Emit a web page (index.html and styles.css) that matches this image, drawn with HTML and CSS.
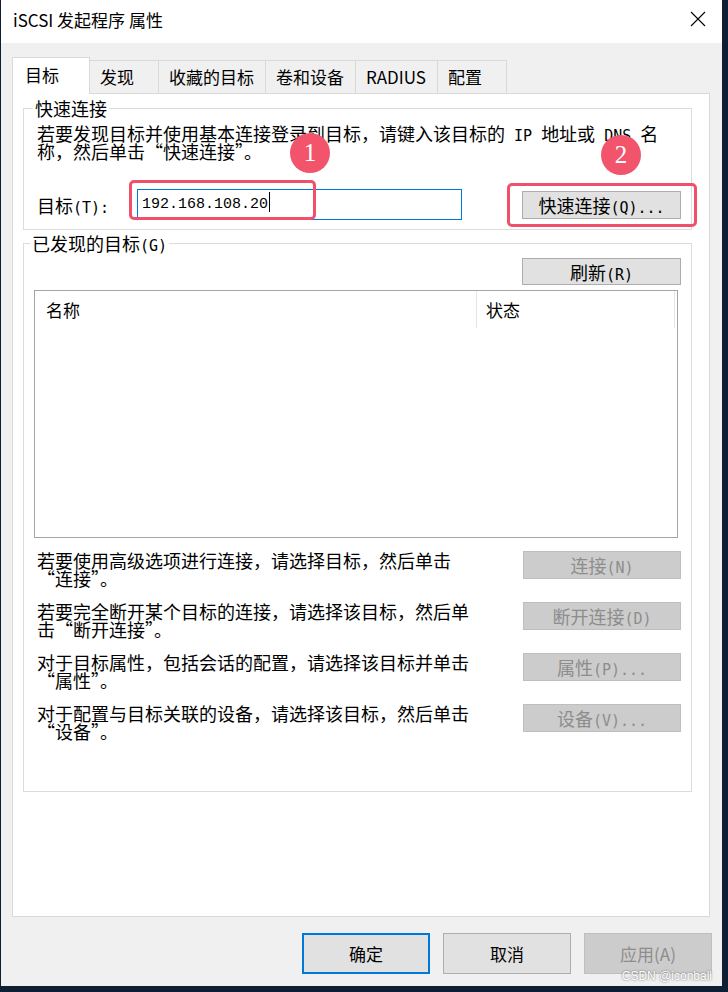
FILE: index.html
```html
<!DOCTYPE html>
<html lang="zh-CN">
<head>
    <meta charset="UTF-8">
    <meta name="viewport" content="width=device-width, initial-scale=1.0">
    <title>iSCSI 发起程序 属性</title>
    <link rel="stylesheet" href="styles.css">
</head>
<body>
    <div class="window">
        <div class="titlebar">
            <span class="title">iSCSI 发起程序 属性</span>
            <svg class="close" width="16" height="16" viewBox="0 0 16 16">
                <path d="M1 1 L15 15 M15 1 L1 15" stroke="#000" stroke-width="1.1" fill="none"/>
            </svg>
        </div>

        <div class="tabs">
            <div class="tab active">目标</div>
            <div class="tab">发现</div>
            <div class="tab">收藏的目标</div>
            <div class="tab">卷和设备</div>
            <div class="tab">RADIUS</div>
            <div class="tab">配置</div>
        </div>

        <div class="panel">
            <fieldset class="group quick">
                <legend>快速连接</legend>
                <p class="desc">若要发现目标并使用基本连接登录到目标，请键入该目标的<span class="hw"> IP </span>地址或<span class="hw"> DNS </span>名<br>称，然后单击“快速连接”。</p>
                <div class="target-row">
                    <label class="target-label">目标<span class="hw">(T):</span></label>
                    <div class="textbox">192.168.108.20<span class="caret"></span></div>
                    <button class="btn quick-btn">快速连接<span class="hw">(Q)...</span></button>
                </div>
            </fieldset>

            <fieldset class="group found">
                <legend>已发现的目标<span class="hw">(G)</span></legend>
                <div class="refresh-row">
                    <button class="btn refresh-btn">刷新<span class="hw">(R)</span></button>
                </div>
                <div class="listview">
                    <div class="list-header">
                        <div class="col col-name">名称</div>
                        <div class="col col-state">状态</div>
                    </div>
                </div>

                <div class="actions">
                    <div class="action">
                        <p>若要使用高级选项进行连接，请选择目标，然后单击<br>“连接”。</p>
                        <button class="btn disabled">连接<span class="hw">(N)</span></button>
                    </div>
                    <div class="action">
                        <p>若要完全断开某个目标的连接，请选择该目标，然后单<br>击“断开连接”。</p>
                        <button class="btn disabled">断开连接<span class="hw">(D)</span></button>
                    </div>
                    <div class="action">
                        <p>对于目标属性，包括会话的配置，请选择该目标并单击<br>“属性”。</p>
                        <button class="btn disabled">属性<span class="hw">(P)...</span></button>
                    </div>
                    <div class="action">
                        <p>对于配置与目标关联的设备，请选择该目标，然后单击<br>“设备”。</p>
                        <button class="btn disabled">设备<span class="hw">(V)...</span></button>
                    </div>
                </div>
            </fieldset>
        </div>

        <div class="footer">
            <button class="dlg-btn default">确定</button>
            <button class="dlg-btn">取消</button>
            <button class="dlg-btn off">应用(A)</button>
        </div>

        <!-- annotations over the screenshot -->
        <div class="mark mark-input"></div>
        <div class="mark mark-button"></div>
        <div class="badge badge-1">1</div>
        <div class="badge badge-2">2</div>
        <div class="watermark">CSDN @iconball</div>
    </div>
</body>
</html>
```

FILE: styles.css
```css
body {
    margin: 0;
    background: #0f1f33;
    font-family: "Noto Sans CJK SC", "Noto Sans", sans-serif;
    color: #000;
}
.window {
    position: relative;
    margin-left: 1px;
    width: 721px;
    height: 986px;
    background: #f0f0f0;
    overflow: hidden;
}
.titlebar {
    height: 43px;
    background: #fff;
    display: flex;
    align-items: center;
    justify-content: space-between;
    padding: 0 16px 0 12px;
    box-sizing: border-box;
}
.title {
    font-size: 17px;
    margin-top: -5px;
}
.close {
    margin-top: -6px;
}

/* half-width latin, like the dialog's system font */
.hw {
    font-family: "DejaVu Sans Mono", "Liberation Mono", monospace;
    font-size: 15px;
    line-height: 0;
}

/* tabs */
.tabs {
    display: flex;
    align-items: flex-end;
    height: 50px;
    padding-left: 13px;
}
.tab {
    height: 33px;
    line-height: 31px;
    padding: 0 11px 0 10px;
    min-width: 70px;
    font-size: 17px;
    border: 1px solid #d9d9d9;
    border-bottom: none;
    margin-left: -1px;
    box-sizing: border-box;
    background: #f0f0f0;
}
.tab.active {
    height: 37px;
    line-height: 33px;
    min-width: 78px;
    margin-left: -2px;
    padding-left: 12px;
    background: #fff;
    position: relative;
    z-index: 1;
    margin-bottom: -1px;
}
.panel {
    margin-left: 11px;
    width: 698px;
    height: 824px;
    box-sizing: border-box;
    background: #fff;
    border: 1px solid #d9d9d9;
}

/* group boxes */
.group {
    margin: 0 0 0 10px;
    width: 669px;
    box-sizing: border-box;
    border: 1px solid #dcdcdc;
    min-width: 0;
}
.group legend {
    font-size: 18px;
    line-height: 20px;
    padding: 0 2px;
    margin-left: -4px;
}
.quick {
    margin-top: 4px;
    padding: 6px 10px 9px 13px;
}
.desc {
    margin: 0;
    font-size: 18px;
    line-height: 18px;
}
.target-row {
    display: flex;
    align-items: center;
    margin-top: 29px;
    height: 31px;
}
.target-label {
    width: 100px;
    font-size: 18px;
}
.textbox {
    width: 325px;
    height: 31px;
    box-sizing: border-box;
    border: 1px solid #0078d7;
    padding-left: 4px;
    font-family: "Liberation Mono", monospace;
    font-size: 15px;
    line-height: 29px;
}
.caret {
    display: inline-block;
    width: 1px;
    height: 20px;
    background: #000;
    vertical-align: -4px;
    margin-left: 1px;
}
.btn {
    font-family: "Noto Sans CJK SC", sans-serif;
    font-size: 18px;
    color: #000;
    background: #e1e1e1;
    border: 1px solid #adadad;
    height: 28px;
    width: 159px;
    padding: 0;
    box-sizing: border-box;
    line-height: 24px;
}
.quick-btn {
    margin-left: auto;
}
.btn.disabled {
    background: #cccccc;
    border-color: #bfbfbf;
    color: #8d8d8d;
    width: 158px;
}

.found {
    margin-top: 3px;
    padding: 5px 10px 51px 10px;
}
.refresh-row {
    display: flex;
    justify-content: flex-end;
}
.refresh-btn {
    height: 27px;
}
.listview {
    margin-top: 5px;
    width: 644px;
    height: 248px;
    box-sizing: border-box;
    border: 1px solid #a5a5a5;
}
.list-header {
    display: flex;
    height: 37px;
}
.col {
    font-size: 17px;
    line-height: 38px;
    border-right: 1px solid #e5e5e5;
    box-sizing: border-box;
}
.col-name {
    width: 442px;
    padding-left: 11px;
}
.col-state {
    width: 198px;
    padding-left: 9px;
}

.actions {
    margin-top: 13px;
    display: flex;
    flex-direction: column;
    gap: 15px;
}
.action {
    display: flex;
    justify-content: space-between;
    align-items: flex-start;
}
.action p {
    margin: 0 0 0 3px;
    font-size: 18px;
    line-height: 18px;
}

/* bottom buttons */
.footer {
    display: flex;
    justify-content: flex-end;
    gap: 13px;
    padding: 16px 10px 0 0;
}
.dlg-btn {
    width: 128px;
    height: 41px;
    font-family: "Noto Sans CJK SC", sans-serif;
    font-size: 17px;
    background: #e1e1e1;
    border: 1px solid #adadad;
    color: #000;
}
.dlg-btn.default {
    border: 2px solid #0078d7;
}
.dlg-btn.off {
    background: #cccccc;
    border-color: #bfbfbf;
    color: #8d8d8d;
}

/* red annotations */
.mark {
    position: absolute;
    border: 3px solid #f0506a;
    border-radius: 5px;
    box-sizing: border-box;
}
.mark-input {
    left: 128px;
    top: 180px;
    width: 187px;
    height: 40px;
}
.mark-button {
    left: 506px;
    top: 183px;
    width: 190px;
    height: 44px;
}
.badge {
    position: absolute;
    width: 40px;
    height: 40px;
    border-radius: 50%;
    background: #f2546b;
    color: #fff;
    font-family: "Liberation Serif", serif;
    font-size: 25px;
    line-height: 40px;
    text-align: center;
}
.badge-1 {
    left: 289px;
    top: 133px;
}
.badge-2 {
    left: 600px;
    top: 135px;
}
.watermark {
    position: absolute;
    right: 10px;
    bottom: 3px;
    font-family: "Liberation Sans", sans-serif;
    font-size: 12px;
    color: #fff;
    text-shadow: 0 0 2px #555;
}
```
